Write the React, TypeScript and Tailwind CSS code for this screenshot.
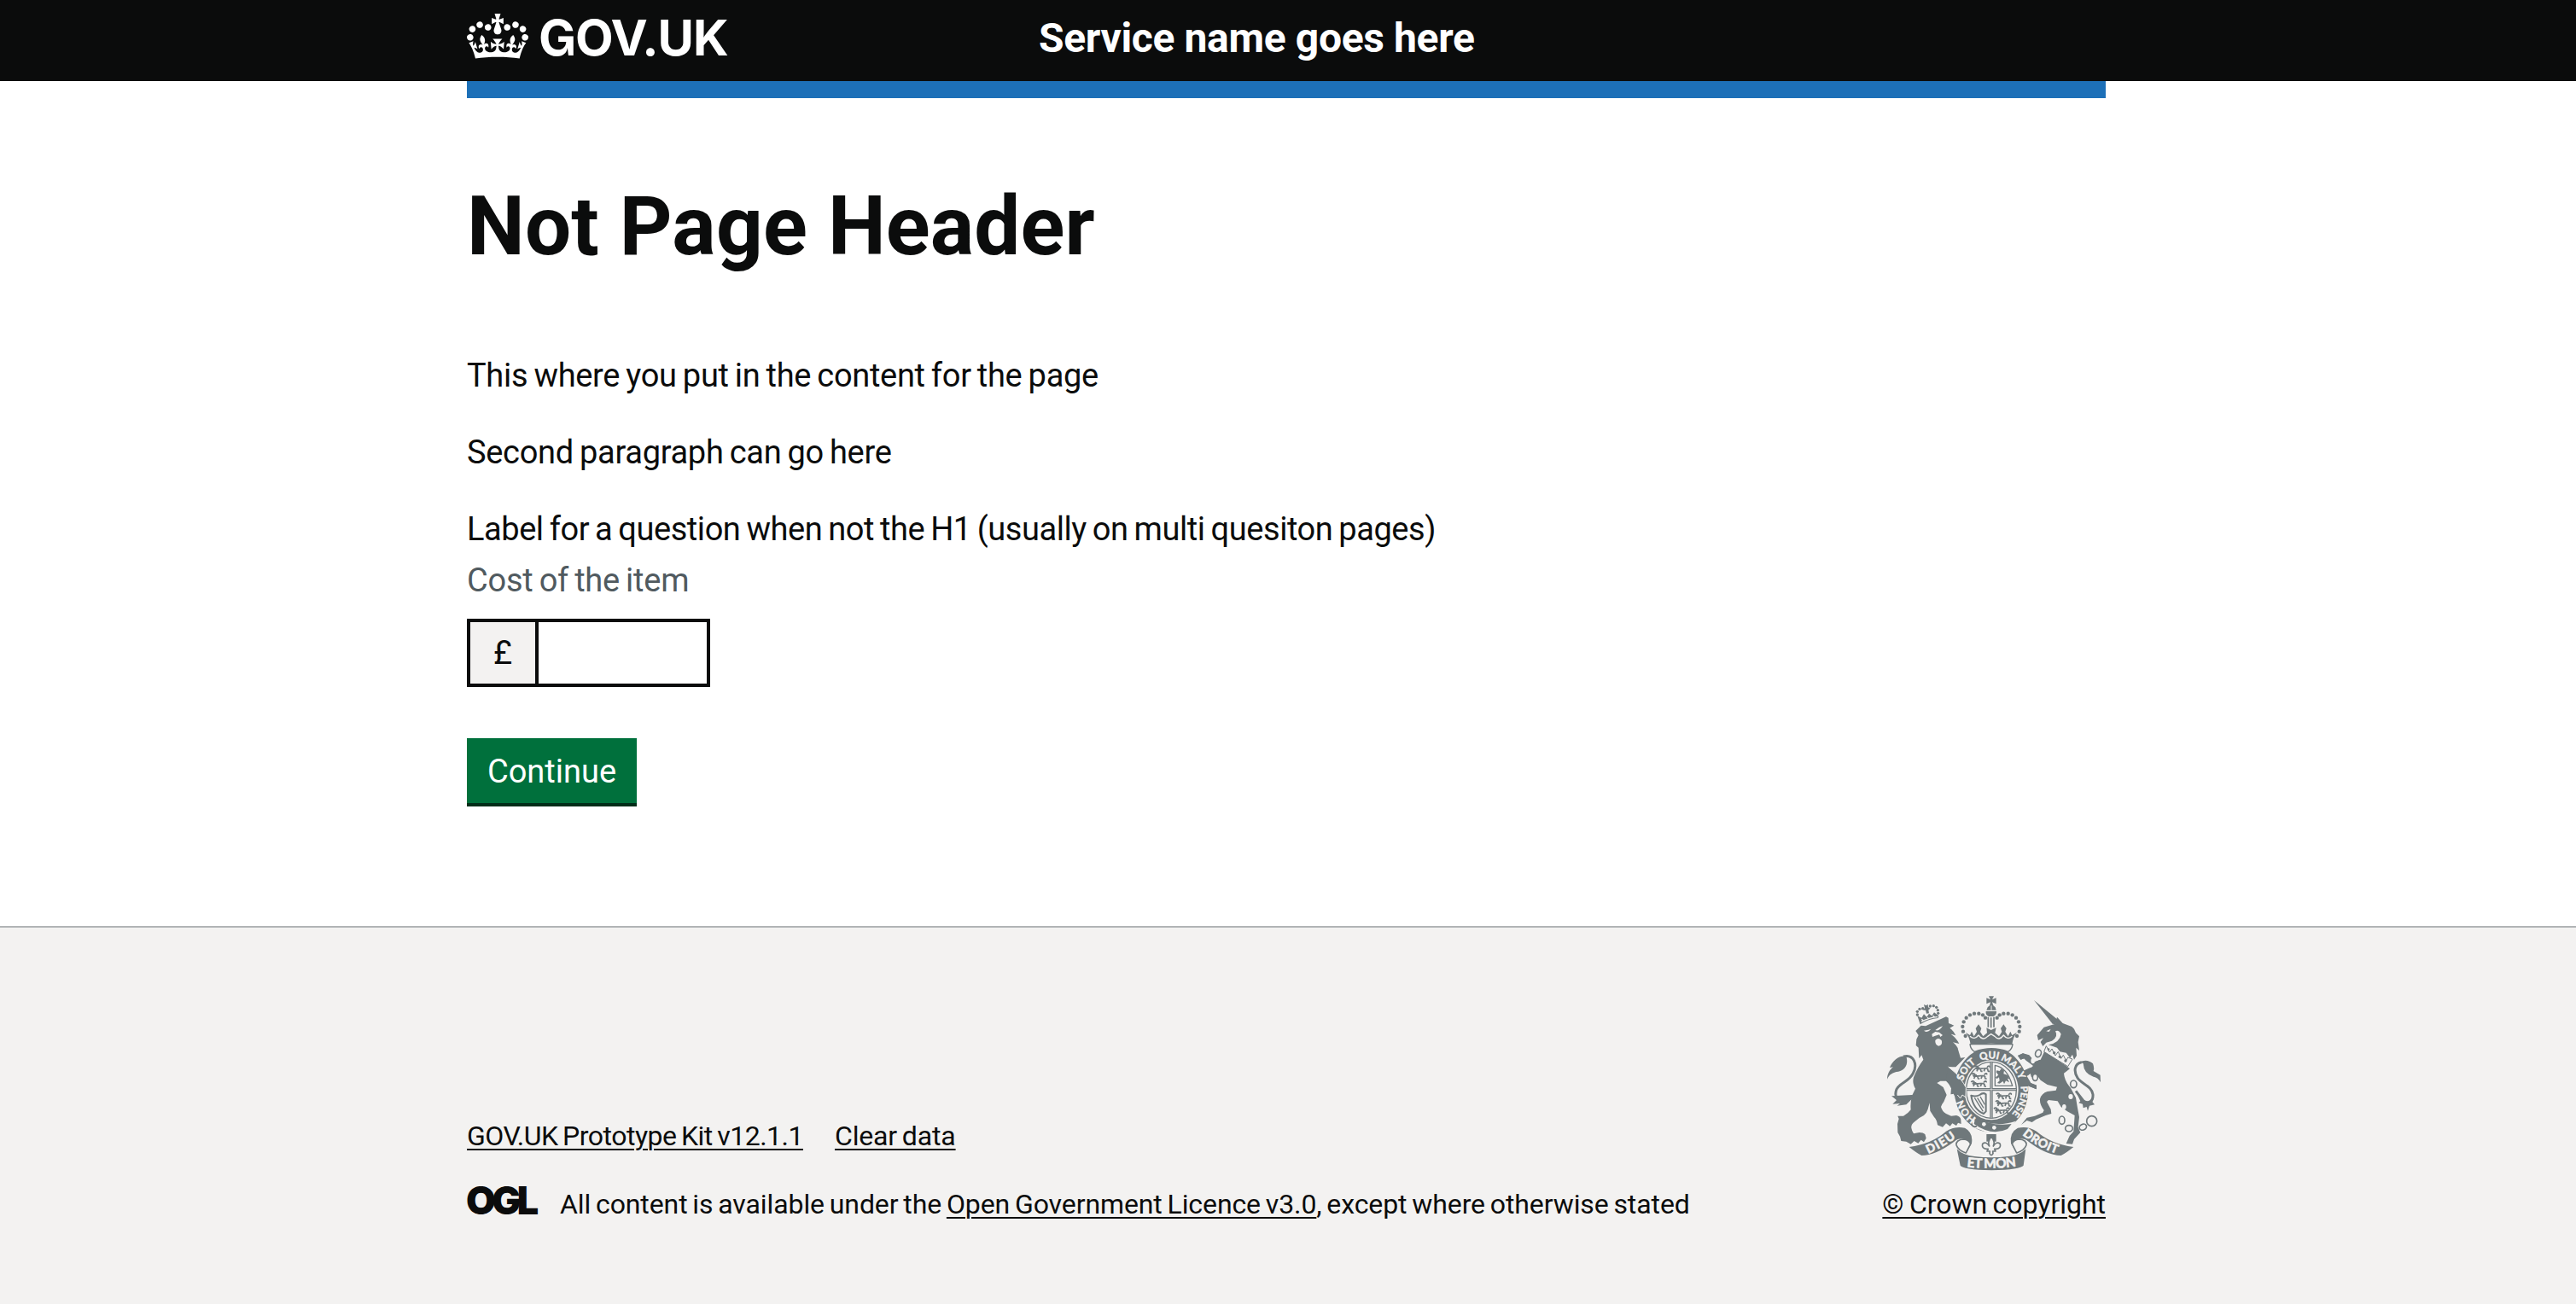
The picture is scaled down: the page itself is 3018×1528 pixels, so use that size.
function CrownIcon() {
  return (
    <svg viewBox="0 0 132 97" className="h-[53px] w-[72px]" fill="currentColor" fillRule="evenodd">
      <path d="M25 30.2c3.5 1.5 7.7-.2 9.1-3.7 1.5-3.6-.2-7.8-3.9-9.2-3.6-1.4-7.6.3-9.1 3.9-1.4 3.5.3 7.5 3.9 9zM9 39.5c3.6 1.5 7.8-.2 9.2-3.7 1.5-3.6-.2-7.8-3.9-9.1-3.6-1.5-7.6.2-9.1 3.8-1.4 3.5.3 7.5 3.8 9zM4.4 57.2c3.5 1.5 7.7-.2 9.1-3.8 1.5-3.6-.2-7.7-3.9-9.1-3.5-1.5-7.6.3-9.1 3.8-1.4 3.5.3 7.6 3.9 9.1zm38.3-21.4c3.5 1.5 7.7-.2 9.1-3.8 1.5-3.6-.2-7.7-3.9-9.1-3.6-1.5-7.6.3-9.1 3.8-1.3 3.6.4 7.7 3.9 9.1zm64.4-5.6c-3.6 1.5-7.8-.2-9.1-3.7-1.5-3.6.2-7.8 3.8-9.2 3.6-1.4 7.7.3 9.2 3.9 1.3 3.5-.4 7.5-3.9 9zm15.9 9.3c-3.6 1.5-7.7-.2-9.1-3.7-1.5-3.6.2-7.8 3.7-9.1 3.6-1.5 7.7.2 9.2 3.8 1.5 3.5-.3 7.5-3.8 9zm4.7 17.7c-3.6 1.5-7.8-.2-9.2-3.8-1.5-3.6.2-7.7 3.9-9.1 3.6-1.5 7.7.3 9.2 3.8 1.3 3.5-.4 7.6-3.9 9.1zM89.3 35.8c-3.6 1.5-7.8-.2-9.2-3.8-1.4-3.6.2-7.7 3.9-9.1 3.6-1.5 7.7.3 9.2 3.8 1.4 3.6-.3 7.7-3.9 9.1zM69.7 17.7l8.9 4.7V9.3l-8.9 2.8c-.2-.3-.5-.6-.9-.9L72.4 0H59.6l3.5 11.2c-.3.3-.6.5-.9.9l-8.8-2.8v13.1l8.8-4.7c.3.3.6.7.9.9l-5 15.4v.1c-.2.8-.4 1.6-.4 2.4 0 4.1 3.1 7.5 7 8.1h.2c.3 0 .7.1 1 .1.4 0 .7 0 1-.1h.2c4-.6 7.1-4.1 7.1-8.1 0-.8-.1-1.7-.4-2.4V34l-5.1-15.4c.4-.2.7-.6 1-.9zM66 92.8c16.9 0 32.8 1.1 47.1 3.2 4-16.9 8.9-26.7 14-33.5l-9.6-3.4c1 4.9 1.1 7.2 0 10.2-1.5-1.4-3-4.3-4.2-8.7L108.6 76c2.8-2 5-3.2 7.5-3.3-4.4 9.4-10 11.9-13.6 11.2-4.3-.8-6.3-4.6-5.6-7.9 1-4.7 5.7-5.9 8-.5 4.3-8.7-3-11.4-7.6-8.8 7.1-7.2 7.9-13.5 2.1-21.1-8 6.1-8.1 12.3-4.5 20.8-4.7-5.4-12.1-2.5-9.5 6.2 3.4-5.2 7.9-2 7.2 3.1-.6 4.3-6.4 7.8-13.5 7.2-10.3-.9-10.9-8-11.2-13.8 2.5-.5 7.1 1.8 11 7.3L80.2 60c-4.1 4.4-8 5.3-12.3 5.4 1.4-4.4 8-11.6 8-11.6H55.5s6.4 7.2 7.9 11.6c-4.2-.1-8-1-12.3-5.4l1.4 16.4c3.9-5.5 8.5-7.7 10.9-7.3-.3 5.8-.9 12.8-11.1 13.8-7.2.6-12.9-2.9-13.5-7.2-.7-5 3.8-8.3 7.1-3.1 2.7-8.7-4.6-11.6-9.4-6.2 3.7-8.5 3.6-14.7-4.6-20.8-5.8 7.6-5 13.9 2.2 21.1-4.7-2.6-11.9.1-7.7 8.8 2.3-5.5 7.1-4.2 8.1.5.7 3.3-1.3 7.1-5.7 7.9-3.5.7-9-1.8-13.5-11.2 2.5.1 4.7 1.3 7.5 3.3l-4.7-15.4c-1.2 4.4-2.7 7.2-4.3 8.7-1.1-3-.9-5.3 0-10.2l-9.5 3.4c5 6.9 9.9 16.7 14 33.5 14.8-2.1 30.8-3.2 47.7-3.2z" />
    </svg>
  );
}

const INK = "#6f787b";
const PAPER = "#f3f2f1";

const crownBeads = [
  [368, 221], [360, 205], [358, 188], [362, 171], [371, 157], [384, 147], [399, 142], [415, 142], [429, 147], [438, 157],
];
const lionCrownBeads = [
  [199, 146], [199, 135], [207, 126], [218, 124], [244, 116], [256, 115], [266, 120], [271, 130], [272, 141],
];

/* One walking lion; three of them fill a quarter of the shield. */
function WalkingLion({ x, y }: { x: number; y: number }) {
  return (
    <g transform={`translate(${x} ${y})`} fill="none" stroke={INK} strokeWidth="5">
      <path d="M2 6c6-7 12-2 12 3s10 2 20 2 14-2 16 4M6 10l10 4M14 12l-4 9M22 12l3 9h5M38 13l-3 8M48 14l2 7h5M46 8c4-8 12-6 8-1" />
      <path d="M8 6h12v9H8z" fill={INK} stroke="none" />
    </g>
  );
}

function RoyalArms() {
  return (
    <svg viewBox="90 80 756 615" className="h-[205px] w-[252px]" fill={INK} strokeLinejoin="round">
      <defs>
        <path id="garter" d="M459 526A104 113 0 0 1 459 300A104 113 0 0 1 459 526" />
        <path id="dieu" d="M238 635Q290 612 340 574" />
        <path id="droit" d="M568 568Q620 612 694 636" />
        <path id="etmon" d="M370 680Q460 692 550 678" />
      </defs>

      {/* lion */}
      <path d="M193 203L212 184L228 186L300 153L308 157L309 176L328 184L313 193Q328 204 334 219L317 214Q338 230 346 248L324 243Q340 256 342 268L351 298L367 296L352 312L334 330L308 329L340 357L362 388L370 402L369 436L357 428L350 440L340 428L333 438L326 424L317 426L318 404L312 392L300 379L280 379L268 386Q280 394 290 401L302 428L292 452Q284 462 282 470Q286 486 300 494L318 502L336 500Q350 504 352 514L353 530L342 526L336 536L322 528L314 538L300 528L288 541L270 534Q268 516 258 506L244 484L242 456L236 478Q232 492 222 500Q204 508 190 522Q176 532 178 544Q180 556 186 564L206 560Q220 560 226 566L230 580L222 594L212 586L202 598L188 590L176 601L160 592L142 590L138 574L130 560L129 530L134 512L130 502L150 502Q166 494 176 480Q174 460 178 440Q182 424 192 406Q180 386 186 366Q200 330 220 304L214 288L205 300L203 262L194 254L196 232L203 218Z" />
      <path d="M222 202Q235 212 247 196L238 199ZM262 200Q276 206 288 186L276 190ZM250 214L262 206L276 208L288 218L280 224L276 216L262 220L252 224ZM262 236Q272 224 284 236Q290 252 274 256Q260 252 262 236Z" fill={PAPER} />
      {/* lion's crown */}
      <path d="M209 180L199 150L214 157L222 144L232 154L240 142L250 150L258 138L274 150L272 158Q238 160 209 180Z" />
      <path d="M213 171Q240 156 270 154M214 162l6 5M234 156l5 4M254 150l5 4" fill="none" stroke={PAPER} strokeWidth="4" />
      {lionCrownBeads.map(([x, y]) => <circle key={`${x}-${y}`} cx={x} cy={y} r="5" />)}
      <path d="M222 110l8 4 6-5 1 11 8 4-7 5 2 12-9 1-3-12-9 0 6-8z" />
      {/* lion's tail */}
      <path d="M150 293C188 284 200 322 184 352C170 382 138 384 126 408C114 440 138 458 160 448L186 430" fill="none" stroke={INK} strokeWidth="9" />
      <path d="M93 373C93 352 104 338 114 330L102 332C112 308 134 288 160 292C168 318 158 342 132 346C112 348 100 356 93 373ZM180 428L108 432L126 446L112 460L138 458L128 466L160 462L180 442Z" />

      {/* unicorn */}
      <path d="M609 95L692 163L684 180L674 178Z" />
      <path d="M620 218L644 190L684 178L690 154L710 176L742 188L750 196L756 210L768 222L764 242L768 272L757 262L759 290L750 304L744 286L736 298L722 280L700 276L690 262L660 252Q700 244 704 214Q696 198 684 204Q696 224 672 238L652 244L640 257L632 242L642 228L624 236Z" />
      <path d="M652 204L668 196L662 206Z" fill={PAPER} />
      <path d="M646 274L722 326L735 336L714 352Q716 378 738 404L756 438L762 474L768 506L764 542L772 560L750 584L744 601L722 599L734 572L748 556L752 500L726 486L704 470L692 450L660 446L654 452L668 478L670 494L650 500L616 514L602 524L584 518L564 533L584 508L612 502L640 490L644 482Q628 460 630 442Q636 422 656 416L686 412L690 400L656 392L632 376L622 362L600 366L596 352L584 362L596 386L618 394L616 408L600 400L586 396L580 372L566 358L570 344L596 332L612 338L606 324L582 308L574 300L562 304L552 290L570 282L592 290L612 312L632 304Z" />
      <path d="M652 256L644 276L728 328L744 302L728 296L722 308L712 288L704 300L694 276L684 290L672 266L664 278Z" fill={PAPER} stroke={INK} strokeWidth="3" />
      <circle cx="660" cy="268" r="4" />
      <circle cx="680" cy="280" r="5" />
      <circle cx="700" cy="294" r="5" />
      <circle cx="720" cy="308" r="5" />
      <ellipse cx="738" cy="434" rx="8" ry="9" fill={PAPER} />
      <ellipse cx="715" cy="470" rx="7" ry="9" fill={PAPER} />
      <g fill={PAPER} stroke={INK} strokeWidth="5">
        <ellipse cx="624" cy="282" rx="10" ry="13" transform="rotate(20 624 282)" />
        <ellipse cx="748" cy="390" rx="11" ry="13" />
        <ellipse cx="707" cy="517" rx="10" ry="14" />
        <ellipse cx="732" cy="546" rx="13" ry="11" />
        <ellipse cx="781" cy="541" rx="13" ry="10" transform="rotate(-25 781 541)" />
        <circle cx="812" cy="520" r="18" />
      </g>
      {/* unicorn's tail */}
      <path d="M776 313C750 318 748 346 762 368C776 390 812 396 816 426C818 452 800 460 784 450L756 414" fill="none" stroke={INK} strokeWidth="9" />
      <path d="M770 312Q796 300 816 318Q822 334 818 344L842 358L843 384Q834 366 818 364Q784 354 782 318ZM760 424L772 450L766 456L780 460L782 474L794 470L798 484L804 466L822 462L814 452L820 436L800 452L784 448Z" />

      {/* garter and shield */}
      <ellipse cx="459" cy="410" rx="136" ry="153" fill={PAPER} />
      <ellipse cx="459" cy="410" rx="130" ry="149" />
      <ellipse cx="459" cy="411" rx="95" ry="105" fill={PAPER} />
      <ellipse cx="459" cy="411" rx="88" ry="99" fill="none" stroke={INK} strokeWidth="4" />
      <path d="M459 312V510M372 409H546" stroke={INK} strokeWidth="10" />
      <path d="M459 312V510M372 409H546" stroke={PAPER} strokeWidth="2" />
      <WalkingLion x={398} y={324} />
      <WalkingLion x={388} y={350} />
      <WalkingLion x={386} y={377} />
      <WalkingLion x={474} y={420} />
      <WalkingLion x={472} y={446} />
      <WalkingLion x={466} y={471} />
      <path d="M472 324Q516 332 533 396H472Z" fill="none" stroke={INK} strokeWidth="4" />
      <path d="M478 342l10 2 6-8 10 6-2 12 14 4 8 14-8-2 6 14-12-6-6 12-4-10-12 8-8-2 8-8-2-12-8 6-4-6 10-8-8-10z" />
      <path d="M388 430Q404 436 418 428Q430 418 440 426V486L432 494Q396 480 388 430Z" fill="none" stroke={INK} strokeWidth="6" />
      <path d="M400 438L430 486M410 438L432 474M420 434L436 462" stroke={INK} strokeWidth="4" />

      {/* buckle and strap */}
      <path d="M394 500Q460 548 545 520L520 556L460 566L390 540Z" fill={PAPER} />
      <path d="M404 502Q452 540 530 530L516 548Q460 574 398 530Z" />
      <path d="M404 498Q384 508 388 528Q394 544 408 538M396 510l14 10" fill="none" stroke={INK} strokeWidth="6" />
      <circle cx="433" cy="531" r="7" fill={PAPER} />
      <circle cx="469" cy="543" r="7" fill={PAPER} />
      {/* paws over the garter */}
      <path d="M308 329L340 357L362 388L370 402L369 436L357 428L350 440L340 428L333 438L326 424L317 426L318 404L300 372Z" />
      <path d="M308 329L340 357L362 388L370 402L369 436L357 428L350 440L340 428" fill="none" stroke={PAPER} strokeWidth="3" />
      <path d="M552 290L562 304L574 300L606 326L596 334L568 344L566 358L580 372L586 396L618 408L618 394L598 386L584 362L600 350L630 340V304L612 312L592 288L570 282Z" />
      <ellipse cx="605" cy="308" rx="7" ry="10" fill={PAPER} />
      <ellipse cx="613" cy="366" rx="9" ry="12" fill={PAPER} stroke={INK} strokeWidth="5" />

      {/* royal crown */}
      <path d="M384 250Q386 268 400 276Q460 254 518 276Q532 268 534 250Z" fill={PAPER} stroke={INK} strokeWidth="4" />
      {crownBeads.map(([x, y]) => (
        <g key={`${x}-${y}`}>
          <circle cx={x} cy={y} r="6.5" />
          <circle cx={917 - x} cy={y} r="6.5" />
        </g>
      ))}
      <path d="M368 208L384 218L390 205L398 222L408 206L404 194L414 180L424 194L420 206L430 222L444 210L442 192L458 200L476 192L472 210L486 222L496 206L492 194L502 180L512 194L508 206L518 222L526 205L532 218L549 208Q534 226 532 252Q458 242 386 252Q384 226 368 208Z" />
      <path d="M384 222Q400 236 414 218Q430 240 446 222L458 214L471 222Q486 240 502 218Q516 236 532 222" fill="none" stroke={PAPER} strokeWidth="4" />
      <path d="M450 81H468L462 93L476 87V108L462 102L466 114L473 120L476 130H442L446 120L453 114L456 102L442 108V87L456 93ZM440 134H477Q478 148 466 152H450Q438 148 440 134Z" />
      <path d="M448 154V190M458 156V192M468 154V190" stroke={INK} strokeWidth="5" />
      <path d="M459 114V130" stroke={PAPER} strokeWidth="3" />

      <g fill={PAPER} stroke={PAPER} strokeWidth="1.2" fontFamily="Lato" fontWeight="700" fontSize="35" textAnchor="middle">
        <text><textPath href="#garter" startOffset="97">HON</textPath></text>
        <text><textPath href="#garter" startOffset="244">SOIT</textPath></text>
        <text><textPath href="#garter" startOffset="334">QUI</textPath></text>
        <text><textPath href="#garter" startOffset="411">MAL</textPath></text>
        <text><textPath href="#garter" startOffset="461">Y</textPath></text>
        <text fontSize="34"><textPath href="#garter" startOffset="548">PENSE</textPath></text>
      </g>

      {/* motto ribbon */}
      <path d="M170 611Q250 600 300 556Q330 536 366 544Q396 560 390 598L374 626Q362 632 354 624L384 596Q360 576 336 586Q268 640 214 641Q196 632 170 611Z" />
      <path d="M748 611Q668 600 618 556Q588 536 552 544Q522 560 528 598L544 626Q556 632 564 624L534 596Q558 576 582 586Q650 640 704 641Q722 632 748 611Z" />
      <path d="M362 584Q334 586 336 604Q342 622 370 632L386 600Q380 586 362 584ZM556 584Q584 586 582 604Q576 622 548 632L532 600Q538 586 556 584Z" fill={PAPER} stroke={INK} strokeWidth="5" />
      <path d="M338 618Q358 640 400 644Q460 652 518 644Q560 640 580 618L572 676Q562 690 460 693Q358 690 350 676Z" />
      <g fill={PAPER} stroke={PAPER} strokeWidth="2" fontFamily="Lato" fontWeight="700">
        <text fontSize="42" textLength="112"><textPath href="#dieu">DIEU</textPath></text>
        <text fontSize="42" textLength="138"><textPath href="#droit">DROIT</textPath></text>
        <text fontSize="46" textLength="174"><textPath href="#etmon" startOffset="3">ET MON</textPath></text>
      </g>
      {/* fleur-de-lis */}
      <path d="M442 566H476V592H442Z" />
      <path d="M459 574Q444 594 452 608Q440 590 428 600Q424 616 442 618H448L444 626H454L453 634Q459 646 465 634L464 626H474L470 618H476Q494 616 490 600Q478 590 466 608Q474 594 459 574Z" fill={PAPER} stroke={INK} strokeWidth="5" />
    </svg>
  );
}

const link = "underline decoration-2 underline-offset-[4px]";

export default function App() {
  return (
    <div className="min-h-[1528px] bg-white font-['Roboto','Noto_Sans',sans-serif] text-[38px] leading-[50px] text-[#0b0c0c]">
      <header className="h-[95px] bg-[#0b0c0c] text-white">
        <div className="mx-auto flex w-[1924px] pr-1">
          <div className="flex w-[670px] pt-[16px]">
            <CrownIcon />
            <span className="-mt-[7px] ml-[12px] font-['Inter'] text-[58px] leading-[70px] font-bold tracking-[-1px] [font-feature-settings:'cv10']">GOV.UK</span>
          </div>
          <span className="pt-[15px] text-[48px] leading-[60px] font-bold tracking-[-0.35px]">Service name goes here</span>
        </div>
      </header>
      <div className="mx-auto w-[1924px] pr-1">
        <div className="h-5 bg-[#1d70b8]" />
        <main className="h-[970px] pt-[100px]">
          <h1 className="mb-[100px] text-[96px] leading-[100px] font-bold tracking-[0.15px]">Not Page Header</h1>
          <p className="mb-10 tracking-[-0.3px] [word-spacing:-2px]">This where you put in the content for the page</p>
          <p className="mb-10 tracking-[-0.3px] [word-spacing:-2px]">Second paragraph can go here</p>
          <label className="mb-[10px] block tracking-[-0.44px] [word-spacing:-2px]">Label for a question when not the H1 (usually on multi quesiton pages)</label>
          <div className="mb-5 tracking-[-0.25px] text-[#505a5f] [word-spacing:-2px]">Cost of the item</div>
          <div className="mb-[60px] flex h-20 w-[285px] border-4 border-[#0b0c0c]">
            <div className="flex w-20 items-center justify-center border-r-4 border-[#0b0c0c] bg-[#f3f2f1]">£</div>
            <input className="w-0 flex-1 outline-none" />
          </div>
          <button className="block h-20 w-[199px] border-b-4 border-[#002d18] bg-[#00703c] pt-[2px] text-white">Continue</button>
        </main>
      </div>
      <footer className="h-[443px] border-t-2 border-[#b1b4b6] bg-[#f3f2f1] text-[32px] leading-[40px]">
        <div className="mx-auto flex w-[1924px] justify-between pt-[80px] pr-1">
          <div className="pt-[144px]">
            <div className="mb-10 flex gap-[37px]">
              <a className={`tracking-[-0.5px] [word-spacing:-2px] ${link}`}>GOV.UK Prototype Kit v12.1.1</a>
              <a className={`tracking-[-0.15px] [word-spacing:-2px] ${link}`}>Clear data</a>
            </div>
            <div className="flex tracking-[-0.1px] [word-spacing:-2px]">
              <span className="-mt-[4px] w-[109px] -ml-px mr-px font-['Inter'] text-[45px] font-black tracking-[-4.6px]">OGL</span>
              <span>All content is available under the <a className={link}>Open Government Licence v3.0</a>, except where otherwise stated</span>
            </div>
          </div>
          <div className="flex flex-col items-center">
            <RoyalArms />
            <a className={`mt-[19px] tracking-[-0.02px] [word-spacing:-1.5px] ${link}`}>© Crown copyright</a>
          </div>
        </div>
      </footer>
    </div>
  );
}
